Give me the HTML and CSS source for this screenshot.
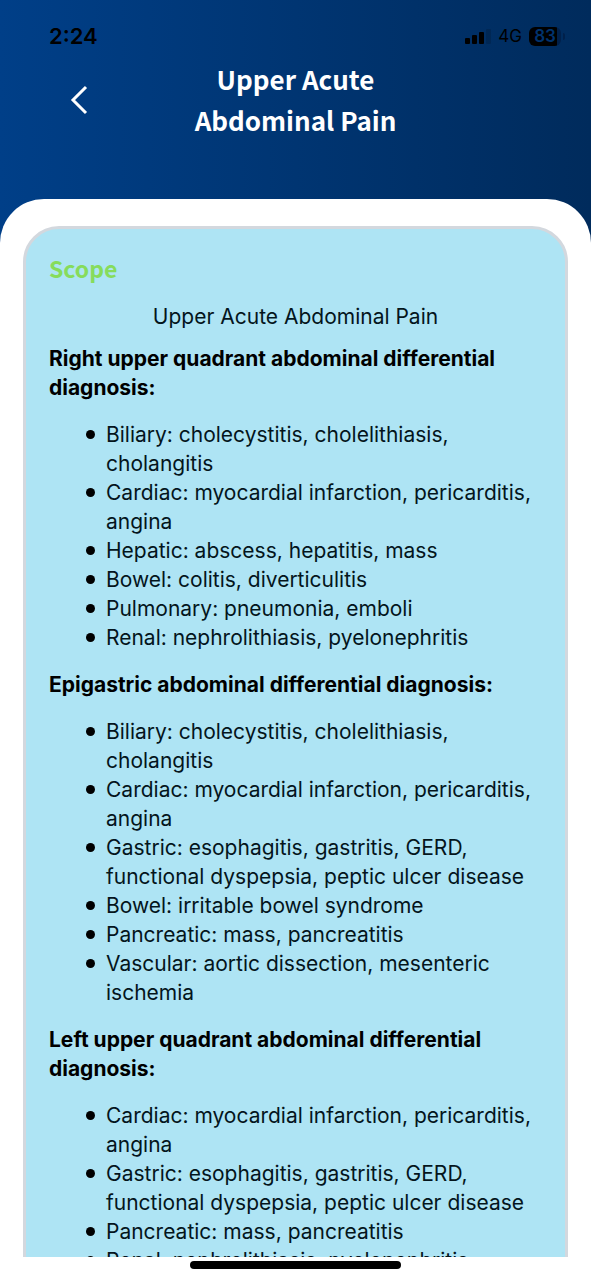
FILE: index.html
```html
<!DOCTYPE html>
<html lang="en">
<head>
<meta charset="utf-8">
<meta name="viewport" content="width=device-width, initial-scale=1">
<title>Upper Acute Abdominal Pain</title>
<link rel="stylesheet" href="styles.css">
</head>
<body>
<div class="app">
  <div class="status">
    <span class="time">2:24</span>
    <div class="indicators">
      <svg class="signal" width="26" height="18" viewBox="0 0 26 18" aria-hidden="true">
        <rect x="0" y="11" width="5" height="6" rx="1"/>
        <rect x="7" y="8" width="5" height="9" rx="1"/>
        <rect x="14" y="5" width="5" height="12" rx="1"/>
        <rect x="21" y="2" width="5" height="15" rx="1" opacity=".15"/>
      </svg>
      <span class="network">4G</span>
      <span class="battery"><span class="charge">83</span></span>
    </div>
  </div>
  <header class="header">
    <button class="back" type="button" aria-label="Back">
      <svg width="20" height="30" viewBox="0 0 20 30" aria-hidden="true"><path d="M17 2 4 15l13 13" fill="none" stroke="#fff" stroke-width="3"/></svg>
    </button>
    <h1 class="title">Upper Acute Abdominal Pain</h1>
  </header>
  <main class="sheet">
    <article class="card">
      <h2 class="scope">Scope</h2>
      <p class="subject">Upper Acute Abdominal Pain</p>
      <h3 class="heading">Right upper quadrant abdominal differential diagnosis:</h3>
      <ul class="list">
        <li>Biliary: cholecystitis, cholelithiasis, cholangitis</li>
        <li>Cardiac: myocardial infarction, pericarditis, angina</li>
        <li>Hepatic: abscess, hepatitis, mass</li>
        <li>Bowel: colitis, diverticulitis</li>
        <li>Pulmonary: pneumonia, emboli</li>
        <li>Renal: nephrolithiasis, pyelonephritis</li>
      </ul>
      <h3 class="heading">Epigastric abdominal differential diagnosis:</h3>
      <ul class="list">
        <li>Biliary: cholecystitis, cholelithiasis, cholangitis</li>
        <li>Cardiac: myocardial infarction, pericarditis, angina</li>
        <li>Gastric: esophagitis, gastritis, GERD, functional dyspepsia, peptic ulcer disease</li>
        <li>Bowel: irritable bowel syndrome</li>
        <li>Pancreatic: mass, pancreatitis</li>
        <li>Vascular: aortic dissection, mesenteric ischemia</li>
      </ul>
      <h3 class="heading">Left upper quadrant abdominal differential diagnosis:</h3>
      <ul class="list">
        <li>Cardiac: myocardial infarction, pericarditis, angina</li>
        <li>Gastric: esophagitis, gastritis, GERD, functional dyspepsia, peptic ulcer disease</li>
        <li>Pancreatic: mass, pancreatitis</li>
        <li>Renal: nephrolithiasis, pyelonephritis</li>
      </ul>
    </article>
  </main>
  <div class="home"><span class="pill"></span></div>
</div>
</body>
</html>
```
FILE: styles.css
```css
* { box-sizing: border-box; }
body { margin: 0; font-family: Inter, "Liberation Sans", sans-serif; color: #04151c; }
h1, h2, h3, p, ul { margin: 0; padding: 0; }
.app {
  display: flex; flex-direction: column; height: 100vh; overflow: hidden;
  background: linear-gradient(90deg, #003f88, #002b5c);
}
.status {
  display: flex; justify-content: space-between; align-items: center;
  padding: 24px 30px 0 49px; height: 48px; color: #000;
}
.time { font-size: 22px; font-weight: 600; }
.indicators { display: flex; align-items: center; gap: 7px; }
.network { font-size: 17px; }
.battery {
  display: flex; position: relative; width: 32px; height: 19px; border-radius: 6px;
  background: linear-gradient(90deg, #000 88%, #00204a 88%);
  font-size: 17px; font-weight: 600; line-height: 19px; color: #00336e;
}
.battery::after {
  content: ""; position: absolute; left: 34px; top: 6px; width: 2px; height: 7px;
  border-radius: 0 2px 2px 0; background: #00204a;
}
.charge { flex: 1; text-align: center; }
.header {
  display: grid; grid-template-columns: 1fr 220px 1fr; align-items: start;
  padding: 10px 24px 59px;
}
.back {
  justify-self: start; margin: 27px 0 0 45px; padding: 0; border: 0;
  background: none; line-height: 0; cursor: pointer;
}
.title {
  grid-column: 2; text-align: center; color: #fff;
  font: 700 26px/41px "Noto Sans CJK SC", "Noto Sans", sans-serif;
}
.sheet {
  flex: 1; min-height: 0; overflow: hidden; padding: 27px 23px 0;
  background: #fff; border-radius: 44px 44px 0 0;
}
.card {
  padding: 19px 23px; border: 3px solid #d3d8de; border-radius: 36px;
  background: #aee4f4; font-size: 21px; line-height: 29px;
}
.scope { color: #86dc5c; font: 700 23px/40px "Noto Sans CJK SC", "Noto Sans", sans-serif; }
.subject { margin: 14px 0 13px; text-align: center; }
.heading { font-size: 21px; line-height: 29px; font-weight: 700; color: #000; }
.list { margin: 18px 0; padding-left: 37px; list-style: none; }
.list li { display: flex; gap: 11px; }
.list li::before {
  content: ""; flex: none; width: 9px; height: 9px; margin-top: 10px;
  border-radius: 50%; background: #000;
}
.home { display: flex; justify-content: center; height: 23px; padding-top: 4px; background: #fff; }
.pill { width: 211px; height: 8px; border-radius: 4px; background: #000; }
```
